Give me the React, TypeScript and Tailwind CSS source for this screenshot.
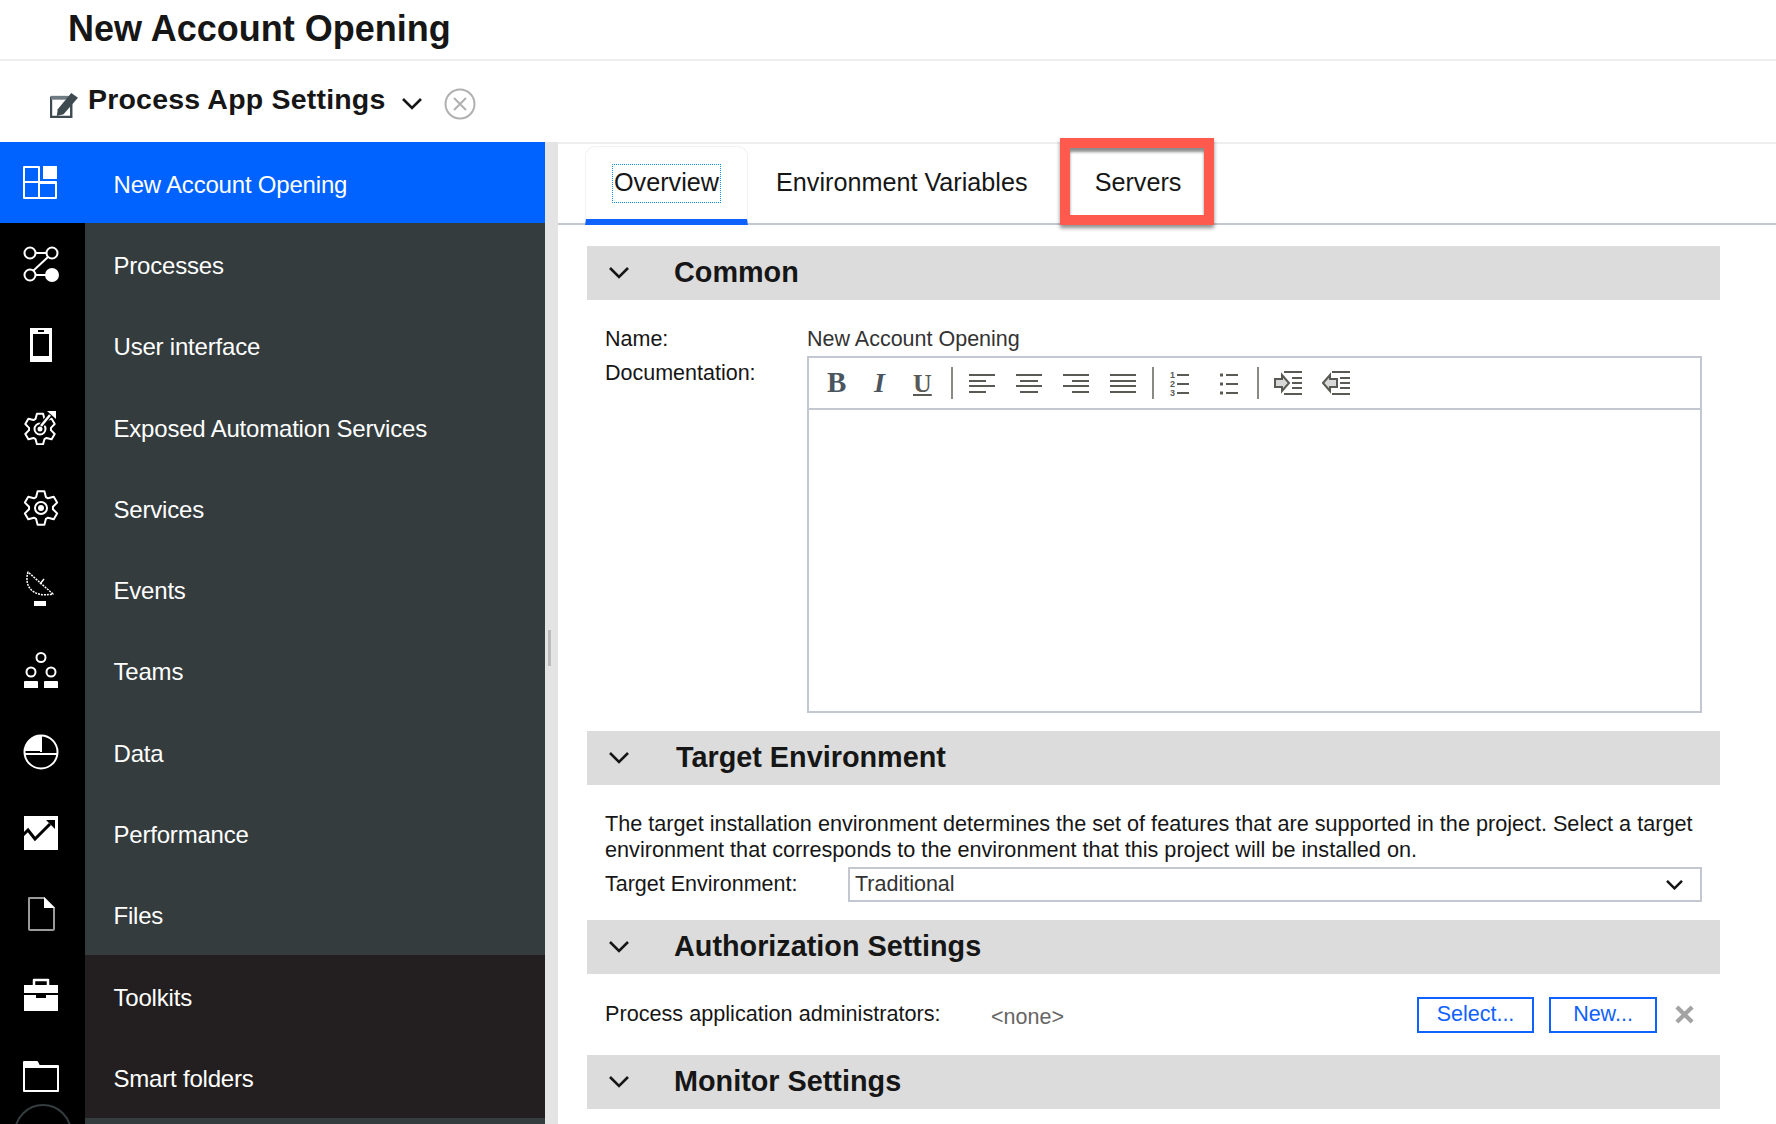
import type { ReactNode } from "react"

const font = "font-['Liberation_Sans',Arial,sans-serif]"

function Svg({ children, cls = "w-[36px] h-[36px]" }: { children: ReactNode; cls?: string }) {
  return (
    <svg viewBox="0 0 36 36" className={cls} fill="none" stroke="currentColor" strokeWidth="2" strokeLinejoin="round">
      {children}
    </svg>
  )
}

// six toothed outline, the same shape for both gear icons
function gearPath(cx: number, cy: number, outer: number, inner: number) {
  const pts: string[] = []
  for (let i = 0; i < 6; i++) {
    const a = (i * Math.PI) / 3 - Math.PI / 2
    const at = (r: number, o: number) =>
      `${(cx + r * Math.cos(a + o)).toFixed(2)} ${(cy + r * Math.sin(a + o)).toFixed(2)}`
    pts.push(at(inner, -0.42), at(outer, -0.2), at(outer, 0.2), at(inner, 0.42))
  }
  return "M" + pts.join("L") + "Z"
}

const icons: Record<string, ReactNode> = {
  home: (
    <Svg>
      <path d="M1 2h15v15H1zM1 17v16h15V17M16 33h17V17H16" />
      <path d="M20 1h14v13H20z" fill="currentColor" stroke="none" />
      <path d="M16 18h18" />
    </Svg>
  ),
  proc: (
    <Svg>
      <circle cx="7" cy="7" r="5.5" />
      <circle cx="29" cy="7" r="5.5" />
      <circle cx="7" cy="29" r="5.5" />
      <circle cx="29" cy="29" r="6" fill="currentColor" />
      <path d="M12.5 7h11M25 11 10 25M12.5 29h11" />
    </Svg>
  ),
  ui: (
    <Svg>
      <path d="M7 1h22v34H7z" fill="currentColor" stroke="none" />
      <path d="M10 7h16v22H10z" fill="#000" stroke="none" />
      <path d="M15 4h6" stroke="#000" />
    </Svg>
  ),
  exposed: (
    <Svg>
      <path d={gearPath(17, 20, 15.5, 11)} />
      <circle cx="17" cy="20" r="5.5" />
      <circle cx="17" cy="20" r="1.5" fill="currentColor" />
      <path d="M18 17 27 6" stroke="#000" strokeWidth="5" />
      <path d="M18 17 27 6" strokeWidth="2.5" />
      <path d="M24 2h9v8z" fill="currentColor" stroke="none" />
    </Svg>
  ),
  services: (
    <Svg>
      <path d={gearPath(18, 18, 17, 12)} />
      <circle cx="18" cy="18" r="6" />
      <circle cx="18" cy="18" r="2" fill="currentColor" />
    </Svg>
  ),
  events: (
    <Svg>
      <path d="M5 1C1 14 8 27 30 23Z" strokeWidth="1.5" strokeDasharray="2 1" />
      <path d="M17 13 21 8" strokeWidth="1.5" />
      <path d="M11 30h12v5H11z" fill="currentColor" stroke="none" />
    </Svg>
  ),
  teams: (
    <Svg>
      <circle cx="18" cy="5.500" r="4.500" />
      <circle cx="8" cy="20" r="4.500" />
      <circle cx="28" cy="20" r="4.500" />
      <path d="M1 30q0-1 1-1h12q1 0 1 1v6H1zM21 30q0-1 1-1h12q1 0 1 1v6H21z" fill="currentColor" stroke="none" />
    </Svg>
  ),
  data: (
    <Svg>
      <circle cx="18" cy="18" r="16.5" />
      <path d="M17 2C8 2 2 9 1.500 17H17Z" fill="currentColor" stroke="none" />
      <path d="M18 2v16M1 20h34" />
    </Svg>
  ),
  perf: (
    <Svg>
      <path d="M1 1h34v34H1z" fill="currentColor" stroke="none" />
      <path d="M0 20l5-5 7 9 15-15" stroke="#000" strokeWidth="3" strokeLinejoin="miter" />
      <path d="M23 5h9v9z" fill="#000" stroke="none" />
    </Svg>
  ),
  files: (
    <Svg>
      <path d="M6 2h15l10 10v21a1 1 0 0 1-1 1H7a1 1 0 0 1-1-1Z" stroke="#9a9a9a" />
      <path d="M21 1l11 11H21z" fill="currentColor" stroke="none" />
    </Svg>
  ),
  toolkits: (
    <Svg>
      <path d="M1 7h34v8H1zM1 17h12v3h10v-3h12v16H1z" fill="currentColor" stroke="none" />
      <path d="M11 7V2h14v5" strokeWidth="2.5" />
    </Svg>
  ),
  folders: (
    <Svg>
      <path d="M1 3h13l2 4h19v25H1z" strokeWidth="2" />
      <path d="M1 3h13l2 4h19v2H1z" fill="currentColor" stroke="none" />
    </Svg>
  ),
}

const nav = [
  { label: "New Account Opening", icon: "home", tone: "active" },
  { label: "Processes", icon: "proc", tone: "main" },
  { label: "User interface", icon: "ui", tone: "main" },
  { label: "Exposed Automation Services", icon: "exposed", tone: "main" },
  { label: "Services", icon: "services", tone: "main" },
  { label: "Events", icon: "events", tone: "main" },
  { label: "Teams", icon: "teams", tone: "main" },
  { label: "Data", icon: "data", tone: "main" },
  { label: "Performance", icon: "perf", tone: "main" },
  { label: "Files", icon: "files", tone: "main" },
  { label: "Toolkits", icon: "toolkits", tone: "dark" },
  { label: "Smart folders", icon: "folders", tone: "dark" },
]

function Sidebar() {
  return (
    <aside className="w-[545px] shrink-0 flex flex-col overflow-hidden">
      {nav.map((item) => (
        <div
          key={item.label}
          className={`h-[81.3px] shrink-0 flex text-white ${
            item.tone === "active" ? "bg-[#0062ff]" : item.tone === "dark" ? "bg-[#231f20]" : "bg-[#343c3e]"
          }`}
        >
          <div
            className={`w-[85px] shrink-0 flex items-center pl-[23px] ${
              item.tone === "active" ? "" : "bg-black"
            }`}
          >
            {icons[item.icon]}
          </div>
          <span className="pl-[28.500px] self-center text-[24px] tracking-[-0.2px] pt-[4px]">{item.label}</span>
        </div>
      ))}
      <div className="flex-1 bg-[#343c3e] flex">
        <div className="w-[85px] bg-black -mt-[14px] relative overflow-hidden">
          <div className="w-[58px] h-[58px] mx-auto rounded-full border-2 border-[#343c3e]" />
        </div>
      </div>
    </aside>
  )
}

function SectionHeader({ title, indent = "ml-[45px]" }: { title: string; indent?: string }) {
  return (
    <div className="h-[54px] bg-[#dcdcdc] flex items-center">
      <svg viewBox="0 0 20 12" className="w-[20px] h-[12px] ml-[22px] shrink-0" fill="none" stroke="#161616" strokeWidth="2.6">
        <path d="M1 1l9 9 9-9" />
      </svg>
      <h2 className={`${indent} pb-[2px] text-[28.800px] font-bold text-[#161616] leading-none`}>{title}</h2>
    </div>
  )
}

const Bars = ({ d }: { d: string }) => (
  <svg viewBox="0 0 28 20" className="w-[28px] h-[20px]" fill="none" stroke="#5a5a55" strokeWidth="2">
    <path d={d} />
  </svg>
)

const Sep = () => <div className="w-[2px] h-[32px] bg-[#8a8a85]" />

function Toolbar() {
  return (
    <div className="h-[52px] border-b-2 border-[#c3c7d0] flex items-center text-[#555]">
      <span className="ml-[18px] w-[24px] font-['Liberation_Serif',serif] font-bold text-[29px] text-[#4a5560]">B</span>
      <span className="ml-[23px] w-[16px] font-['Liberation_Serif',serif] italic text-[28px] font-bold text-[#4a5560]">I</span>
      <span className="ml-[23px] w-[22px] font-['Liberation_Serif',serif] font-bold text-[26px] underline text-[#5a5a55]">U</span>
      <div className="ml-[16px]"><Sep /></div>
      <div className="ml-[15px] flex gap-[19px]">
        <Bars d="M1 2h26M1 8h17M1 13h26M1 19h17" />
        <Bars d="M1 2h26M5 8h18M1 13h26M5 19h18" />
        <Bars d="M1 2h26M10 8h17M1 13h26M10 19h17" />
        <Bars d="M1 2h26M1 8h26M1 13h26M1 19h26" />
      </div>
      <div className="ml-[15px]"><Sep /></div>
      <svg viewBox="0 0 20 28" className="ml-[16px] w-[20px] h-[28px]" fill="none" stroke="#5a5a55" strokeWidth="2">
        <text x="0" y="9" fontSize="9" fontWeight="700" fill="#5a5a55" stroke="none">1</text>
        <text x="0" y="18" fontSize="9" fontWeight="700" fill="#5a5a55" stroke="none">2</text>
        <text x="0" y="27" fontSize="9" fontWeight="700" fill="#5a5a55" stroke="none">3</text>
        <path d="M7 6h12M7 15h12M7 24h12" />
      </svg>
      <svg viewBox="0 0 20 28" className="ml-[29px] w-[20px] h-[28px]" fill="none" stroke="#5a5a55" strokeWidth="2">
        <path d="M1 6h3M1 15h3M1 24h3" strokeWidth="3" />
        <path d="M7 6h12M7 15h12M7 24h12" />
      </svg>
      <div className="ml-[18px]"><Sep /></div>
      <svg viewBox="0 0 28 26" className="ml-[15px] w-[28px] h-[26px]" fill="none" stroke="#5a5a55" strokeWidth="2">
        <path d="M10 2h18M18 8h10M18 13h10M18 18h10M10 24h18" />
        <path d="M1 9h7V5l7 8-7 8v-4H1z" fill="#d8d8d8" />
      </svg>
      <svg viewBox="0 0 28 26" className="ml-[20px] w-[28px] h-[26px]" fill="none" stroke="#5a5a55" strokeWidth="2">
        <path d="M10 2h18M18 8h10M18 13h10M18 18h10M10 24h18" />
        <path d="M15 9H8V5l-7 8 7 8v-4h7z" fill="#d8d8d8" />
      </svg>
    </div>
  )
}

function Tabs() {
  return (
    <div className="h-[81px] shrink-0 border-b-2 border-[#c3c7d0] flex text-[#161616] text-[25.200px]">
      <div className="ml-[27px] mt-[2px] w-[163px] h-[79px] rounded-t-[10px] border-x border-t border-[#f2f2f2] border-b-[6px] border-b-[#0f62fe] flex justify-center pt-[17px]">
        <span className="h-[39px] px-[1px] border border-dotted border-[#0f8fe0] leading-[34px]">Overview</span>
      </div>
      <span className="ml-[28px] mt-[20px]">Environment Variables</span>
      <div className="ml-[32px] -mt-[6px] w-[154px] h-[87px] border-[10px] border-[#ff5a4d] shadow-[0_3px_4px_rgba(0,0,0,0.45),inset_0_4px_3px_rgba(0,0,0,0.45)] flex justify-center pt-[16px] pl-[3px]">
        Servers
      </div>
    </div>
  )
}

function Content() {
  return (
    <main className="flex-1 min-w-0 flex flex-col border-t-2 border-[#eeeeee] text-[#161616] text-[21.500px]">
      <Tabs />
      <div className="pl-[29px] pr-[56px] pt-[21px] flex flex-col">
        <SectionHeader title="Common" />
        <div className="pl-[18px] pr-[18px] pt-[26px] pb-[18px] flex">
          <div className="w-[202px] shrink-0 leading-[26px]">
            <div>Name:</div>
            <div className="mt-[8px]">Documentation:</div>
          </div>
          <div className="flex-1 min-w-0">
            <div className="leading-[26px] text-[#333]">New Account Opening</div>
            <div className="mt-[4px] h-[357px] border-2 border-[#c3c7d0]">
              <Toolbar />
            </div>
          </div>
        </div>
        <SectionHeader title="Target Environment" indent="ml-[47px]" />
        <div className="pl-[18px] pr-[18px] pt-[26px] pb-[18px]">
          <p className="leading-[25.500px] text-[21.650px]">
            The target installation environment determines the set of features that are supported in the project. Select a target environment that corresponds to the environment that this project will be installed on.
          </p>
          <div className="mt-[5px] flex items-center">
            <span className="w-[243px] shrink-0">Target Environment:</span>
            <div className="flex-1 h-[35px] border-2 border-[#c3c7d0] flex items-center justify-between pl-[5px] pr-[17px] text-[#333]">
              Traditional
              <svg viewBox="0 0 20 12" className="w-[17px] h-[10px]" fill="none" stroke="#161616" strokeWidth="3">
                <path d="M1 1l9 9 9-9" />
              </svg>
            </div>
          </div>
        </div>
        <SectionHeader title="Authorization Settings" />
        <div className="pl-[18px] pr-[26px] h-[81px] flex items-center">
          <span className="w-[386px] shrink-0 text-[21.650px]">Process application administrators:</span>
          <span className="flex-1 pt-[5px] text-[21.500px] text-[#666]">{"<none>"}</span>
          <button className="w-[117px] h-[36px] border-2 border-[#0f62fe] text-[#0f62fe] text-[21.500px] leading-none">Select...</button>
          <button className="ml-[15px] w-[108px] h-[36px] border-2 border-[#0f62fe] text-[#0f62fe] text-[21.500px] leading-none">New...</button>
          <svg viewBox="0 0 20 20" className="ml-[18px] w-[19px] h-[19px]" fill="none" stroke="#a3a3a3" strokeWidth="4.500">
            <path d="M2 2l16 16M18 2L2 18" />
          </svg>
        </div>
        <SectionHeader title="Monitor Settings" />
      </div>
    </main>
  )
}

export default function App() {
  return (
    <div className={`${font} w-[1776px] h-[1124px] bg-white overflow-hidden flex flex-col`}>
      <header className="h-[61px] shrink-0 border-b-2 border-[#eeeeee] pl-[68px] pt-[7px]">
        <h1 className="text-[36px] font-bold text-[#161616] leading-[44px]">New Account Opening</h1>
      </header>
      <div className="h-[81px] shrink-0 flex items-center pl-[50px]">
        <svg viewBox="0 0 30 28" className="w-[29px] h-[27px] mt-[6px]">
          <path d="M1 7h21v20H1z" fill="none" stroke="#3f4a50" strokeWidth="2.500" />
          <path d="M1 5h18v4H1z" fill="#6f7b82" />
          <path d="M8 19 22 2l7 5-15 17-7 2z" fill="#3f4a50" />
        </svg>
        <span className="ml-[9px] -mt-[4px] text-[28.500px] font-bold text-[#161616] tracking-[0.2px]">Process App Settings</span>
        <svg viewBox="0 0 20 12" className="ml-[16px] mt-[4px] w-[20px] h-[12px]" fill="none" stroke="#161616" strokeWidth="2.600">
          <path d="M1 1l9 9 9-9" />
        </svg>
        <svg viewBox="0 0 32 32" className="ml-[22px] mt-[5px] w-[32px] h-[32px]" fill="none" stroke="#b0b0b0" strokeWidth="2">
          <circle cx="16" cy="16" r="14.500" />
          <path d="M10 10l12 12M22 10 10 22" />
        </svg>
      </div>
      <div className="flex-1 min-h-0 flex">
        <Sidebar />
        <div className="w-[13px] shrink-0 bg-[#e4e4e4] pt-[488px] pl-[3px]">
          <div className="w-[3px] h-[36px] bg-[#bcbcbc]" />
        </div>
        <Content />
      </div>
    </div>
  )
}
